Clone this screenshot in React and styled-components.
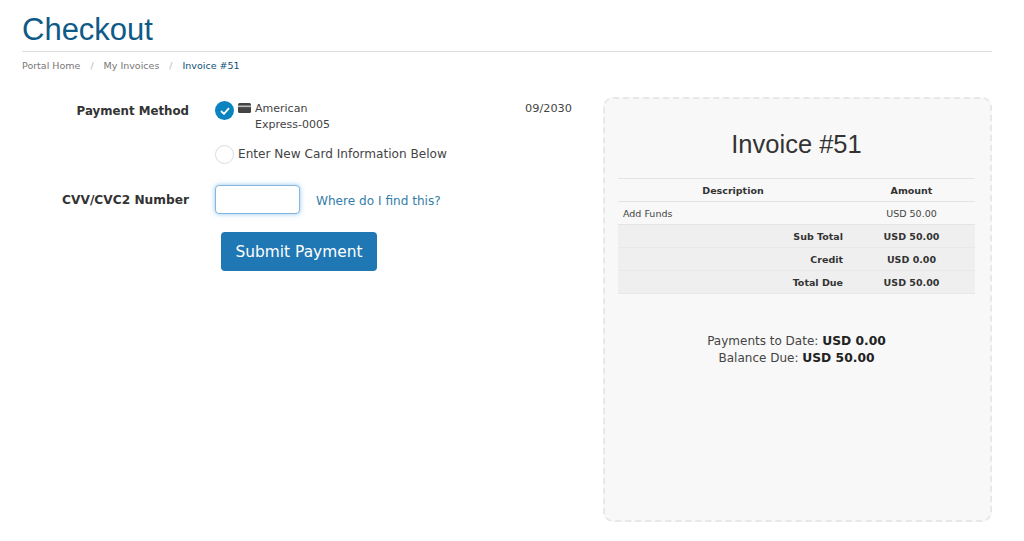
import React from 'react';
import styled, { createGlobalStyle } from 'styled-components';

const GlobalStyle = createGlobalStyle`
  html, body {
    margin: 0;
    padding: 0;
    background: #fff;
  }

  body {
    font-family: "DejaVu Sans", Verdana, sans-serif;
    color: #333;
  }
`;

const lineItems = [
  { label: 'Sub Total', value: 'USD 50.00' },
  { label: 'Credit', value: 'USD 0.00' },
  { label: 'Total Due', value: 'USD 50.00' },
];

function CardIcon() {
  return (
    <svg width="13" height="10" viewBox="0 0 13 10" aria-hidden="true">
      <rect width="13" height="10" rx="1.5" fill="#444" />
      <rect y="2.5" width="13" height="1.6" fill="#bbb" />
    </svg>
  );
}

function CheckIcon() {
  return (
    <svg width="10" height="8" viewBox="0 0 10 8" aria-hidden="true">
      <path d="M1 4l3 2.8L9 1.2" fill="none" stroke="#fff" strokeWidth="1.8" />
    </svg>
  );
}

export default function App() {
  return (
    <Page>
      <GlobalStyle />
      <Title>Checkout</Title>
      <Breadcrumb>
        <Crumb>Portal Home</Crumb>
        <Slash>/</Slash>
        <Crumb>My Invoices</Crumb>
        <Slash>/</Slash>
        <Crumb active>Invoice #51</Crumb>
      </Breadcrumb>

      <Columns>
        <Form>
          <MethodRow>
            <MethodLabel>Payment Method</MethodLabel>
            <Options>
              <SavedCard>
                <Radio checked><CheckIcon /></Radio>
                <IconSlot><CardIcon /></IconSlot>
                <CardName>American Express-0005</CardName>
                <Expiry>09/2030</Expiry>
              </SavedCard>
              <NewCard>
                <Radio />
                <span>Enter New Card Information Below</span>
              </NewCard>
            </Options>
          </MethodRow>

          <CvvRow>
            <Label>CVV/CVC2 Number</Label>
            <CvvInput type="text" />
            <HelpLink href="#cvv">Where do I find this?</HelpLink>
          </CvvRow>

          <SubmitButton type="button">Submit Payment</SubmitButton>
        </Form>

        <Panel>
          <PanelTitle>Invoice #51</PanelTitle>
          <InvoiceTable>
            <thead>
              <tr>
                <HeadCell>Description</HeadCell>
                <HeadCell>Amount</HeadCell>
              </tr>
            </thead>
            <tbody>
              <tr>
                <Cell>Add Funds</Cell>
                <Cell center>USD 50.00</Cell>
              </tr>
              {lineItems.map((item) => (
                <tr key={item.label}>
                  <TotalCell right>{item.label}</TotalCell>
                  <TotalCell>{item.value}</TotalCell>
                </tr>
              ))}
            </tbody>
          </InvoiceTable>
          <Summary>
            <div>Payments to Date: <b>USD 0.00</b></div>
            <div>Balance Due: <b>USD 50.00</b></div>
          </Summary>
        </Panel>
      </Columns>
    </Page>
  );
}

const Page = styled.div`
  width: 970px;
  padding: 0 32px 0 22px;
`;

const Title = styled.h1`
  margin: 0;
  padding: 12px 0 4px;
  height: 35px;
  font: 400 31px/35px "Liberation Sans", Arial, sans-serif;
  color: #0f5a86;
  border-bottom: 1px solid #ddd;
`;

const Breadcrumb = styled.div`
  display: flex;
  align-items: center;
  height: 14px;
  margin-top: 7px;
  font-size: 9.5px;
  line-height: 14px;
`;

const Crumb = styled.span`
  color: ${(props) => (props.active ? '#0d4f78' : '#777')};
`;

const Slash = styled.span`
  margin: 0 10px;
  color: #bbb;
`;

const Columns = styled.div`
  display: flex;
  justify-content: space-between;
  margin-top: 24px;
`;

const Form = styled.div`
  width: 550px;
  padding-top: 4px;
  font-size: 12.1px;
`;

const Label = styled.div`
  flex: none;
  width: 167px;
  text-align: right;
  font-weight: 700;
  font-size: 12.2px;
  color: #333;
`;

const MethodLabel = styled(Label)`
  padding-top: 3px;
  font-size: 11.8px;
`;

const MethodRow = styled.div`
  display: flex;
  gap: 26px;
`;

const Options = styled.div`
  flex: 1;
`;

const SavedCard = styled.div`
  display: flex;
  align-items: flex-start;
  font-size: 11px;
  line-height: 16px;
`;

const Radio = styled.span`
  flex: none;
  display: flex;
  align-items: center;
  justify-content: center;
  box-sizing: border-box;
  width: 19px;
  height: 19px;
  border-radius: 50%;
  border: ${(props) => (props.checked ? 'none' : '1px solid #ddd')};
  background: ${(props) => (props.checked ? '#0a83c0' : '#fff')};
`;

const IconSlot = styled.span`
  margin: 2px 4px 0;
  line-height: 0;
`;

const CardName = styled.span`
  width: 90px;
  color: #444;
`;

const Expiry = styled.span`
  margin-left: auto;
  font-size: 11.3px;
  color: #444;
`;

const NewCard = styled.div`
  display: flex;
  align-items: center;
  gap: 4px;
  margin-top: 10px;
  color: #444;

  ${Radio} {
    margin-top: 2px;
  }
`;

const CvvRow = styled.div`
  display: flex;
  align-items: center;
  margin-top: 21px;

  ${Label} {
    margin-right: 26px;
  }
`;

const CvvInput = styled.input`
  box-sizing: border-box;
  width: 85px;
  height: 29px;
  padding: 0 8px;
  border: 1px solid #86b6dc;
  border-radius: 4px;
  box-shadow: 0 0 5px rgba(102, 175, 233, 0.7);
  outline: none;
`;

const HelpLink = styled.a`
  margin-left: 16px;
  padding-top: 2px;
  color: #337ea8;
  text-decoration: none;
`;

const SubmitButton = styled.button`
  display: block;
  width: 156px;
  height: 39px;
  margin: 18px 0 0 199px;
  border: none;
  border-radius: 4px;
  background: #1f78b4;
  color: #fff;
  font: 400 15.4px "DejaVu Sans", Verdana, sans-serif;
`;

const Panel = styled.div`
  box-sizing: border-box;
  width: 389px;
  height: 425px;
  padding: 0 15px 0 13px;
  background: #f8f8f8;
  border: 2px dashed #e8e8e8;
  border-radius: 10px;
`;

const PanelTitle = styled.h2`
  margin: 0;
  padding-top: 30px;
  height: 49px;
  text-align: center;
  font: 400 25.5px/30px "Liberation Sans", Arial, sans-serif;
  color: #333;
`;

const InvoiceTable = styled.table`
  width: 100%;
  border-collapse: collapse;
  table-layout: fixed;
  font-size: 9.5px;

  tr > *:last-child {
    width: 127px;
  }
`;

const HeadCell = styled.th`
  height: 22px;
  padding: 0;
  text-align: center;
  font-weight: 700;
  border-top: 1px solid #e4e4e4;
  border-bottom: 1px solid #e4e4e4;
`;

const Cell = styled.td`
  height: 22px;
  padding: 0 5px;
  text-align: ${(props) => (props.center ? 'center' : 'left')};
  color: #444;
  border-bottom: 1px solid #e4e4e4;
`;

const TotalCell = styled.td`
  height: 22px;
  padding: 0 5px;
  text-align: ${(props) => (props.right ? 'right' : 'center')};
  font-weight: 700;
  background: #efefef;
  border-bottom: 1px solid #e8e8e8;
`;

const Summary = styled.div`
  margin-top: 39px;
  text-align: center;
  font-size: 12px;
  line-height: 17px;
  color: #444;

  b {
    color: #222;
    font-size: 12.3px;
    line-height: 1;
  }
`;
